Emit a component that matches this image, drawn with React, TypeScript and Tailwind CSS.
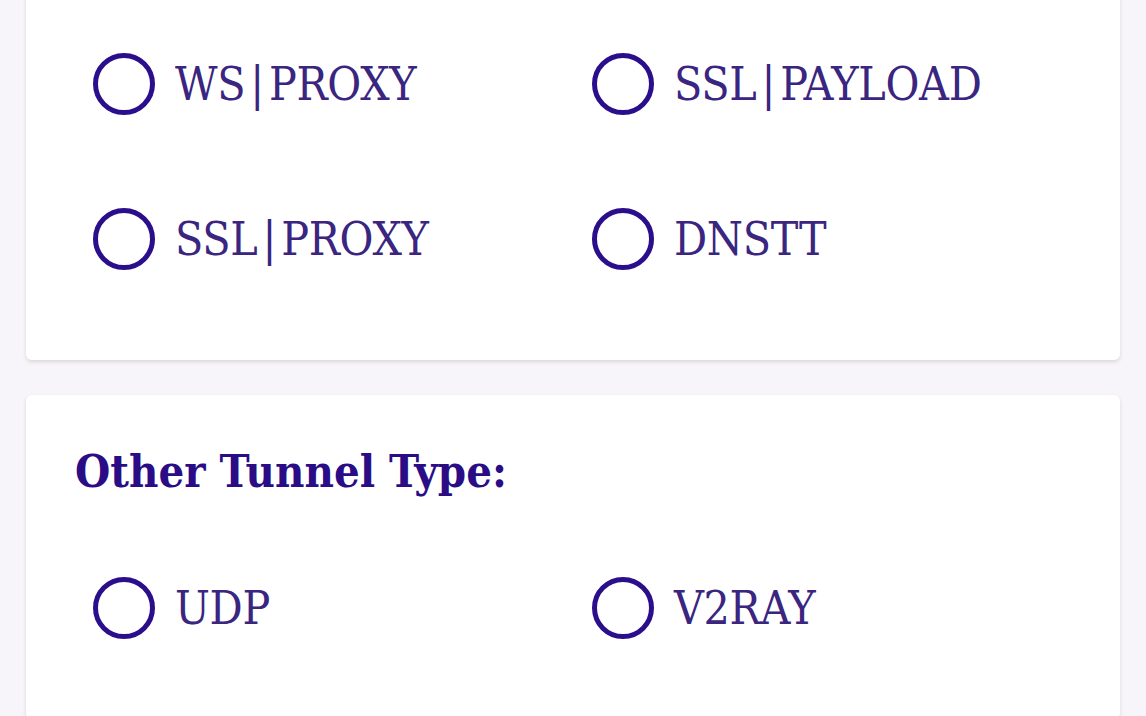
const serif = "font-['DejaVu_Serif','Liberation_Serif',serif]";

function Radio({ label }: { label: string }) {
  const parts = label.split("|");
  return (
    <div className="flex items-center gap-[20px]">
      <span className="w-[62px] h-[62px] rounded-full border-[5px] border-[#2a0e8c] shrink-0" />
      <span className={`${serif} font-stretch-condensed text-[46px] leading-none text-[#3a2580] tracking-[-0.3px]`}>
        {parts.length > 1 ? (
          <>
            {parts[0]}
            <span className="mx-[5px]">|</span>
            {parts[1]}
          </>
        ) : (
          label
        )}
      </span>
    </div>
  );
}

export default function App() {
  return (
    <div className="h-[716px] overflow-hidden bg-[#f7f5fa] px-[26px]">
      <div className="-mt-[40px] bg-white rounded-[6px] shadow-[0_2px_4px_rgba(0,0,0,0.12)] pt-[93px] pb-[90px] pl-[67px]">
        <div className="grid grid-cols-[499px_1fr] gap-y-[93px]">
          <Radio label="WS|PROXY" />
          <Radio label="SSL|PAYLOAD" />
          <Radio label="SSL|PROXY" />
          <Radio label="DNSTT" />
        </div>
      </div>

      <div className="mt-[35px] bg-white rounded-[6px] shadow-[0_2px_4px_rgba(0,0,0,0.12)] pt-[53px] pb-[80px] pl-[49px]">
        <h2 className={`${serif} font-stretch-condensed font-bold text-[45px] leading-[48px] text-[#2a0d86]`}>
          Other Tunnel Type:
        </h2>
        <div className="mt-[81px] pl-[18px] grid grid-cols-[499px_1fr]">
          <Radio label="UDP" />
          <Radio label="V2RAY" />
        </div>
      </div>
    </div>
  );
}
